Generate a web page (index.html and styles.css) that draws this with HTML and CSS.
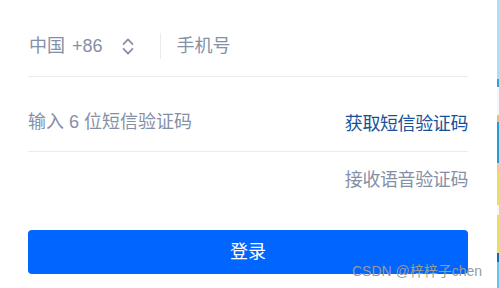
FILE: index.html
```html
<!DOCTYPE html>
<html lang="zh-CN">
<head>
<meta charset="utf-8">
<title>登录</title>
<link rel="stylesheet" href="styles.css">
</head>
<body>
<div class="form">
  <div class="row row-phone">
    <div class="country">
      <span class="country-text">中国 +86</span>
      <svg class="arrows" width="12" height="18" viewBox="0 0 12 18" aria-hidden="true">
        <path d="M1.5 7.2 L6 2.4 L10.5 7.2" fill="none" stroke="#8590a6" stroke-width="1.7" stroke-linecap="round" stroke-linejoin="round"/>
        <path d="M1.5 11.8 L6 16.6 L10.5 11.8" fill="none" stroke="#8590a6" stroke-width="1.7" stroke-linecap="round" stroke-linejoin="round"/>
      </svg>
    </div>
    <span class="sep"></span>
    <span class="placeholder">手机号</span>
  </div>
  <div class="row row-code">
    <span class="placeholder">输入 6 位短信验证码</span>
    <span class="link">获取短信验证码</span>
  </div>
  <div class="voice">
    <span class="voice-link">接收语音验证码</span>
  </div>
  <button class="submit" type="button">登录</button>
</div>
<div class="watermark">CSDN @梓梓子chen</div>
<div class="edge"></div>
</body>
</html>
```
FILE: styles.css
```css
html, body {
  margin: 0;
  padding: 0;
  background: #ffffff;
}
body {
  width: 499px;
  height: 288px;
  position: relative;
  overflow: hidden;
  font-family: "Liberation Sans", "Noto Sans CJK SC", sans-serif;
  font-size: 18px;
  line-height: 18px;
  color: #8590a6;
}
.form {
  width: 440px;
  margin-left: 28px;
  padding-top: 16px;
  display: flex;
  flex-direction: column;
}
.row {
  display: flex;
  align-items: center;
  border-bottom: 1px solid #ebebeb;
}
.row-phone {
  height: 60px;
}
.country {
  display: flex;
  align-items: center;
}
.country-text {
  padding-left: 1px;
  word-spacing: 2px;
}
.arrows {
  display: block;
  margin-left: 19px;
}
.sep {
  width: 1px;
  height: 26px;
  background: #ebebeb;
  margin-left: 26px;
  margin-right: 16px;
}
.row-code {
  margin-top: 15px;
  height: 59px;
  justify-content: space-between;
}
.link {
  color: #175199;
  position: relative;
  top: 2px;
  letter-spacing: -0.4px;
}
.voice {
  display: flex;
  justify-content: flex-end;
  margin-top: 19px;
  letter-spacing: -0.4px;
}
.submit {
  margin-top: 41px;
  height: 44px;
  border: none;
  border-radius: 4px;
  background: #0066ff;
  color: #ffffff;
  font-family: inherit;
  font-size: 18px;
  line-height: 18px;
  padding: 0;
  cursor: pointer;
}
.watermark {
  position: absolute;
  left: 352px;
  top: 263px;
  font-size: 14px;
  line-height: 17px;
  color: #9a9a9a;
  font-family: "Liberation Sans", "Noto Sans CJK SC", sans-serif;
  white-space: nowrap;
}
.edge {
  position: absolute;
  right: 0;
  top: 0;
  width: 2px;
  height: 288px;
  background: linear-gradient(to bottom,
    #a8e2f0 0, #a8e2f0 79px,
    #2aa3d9 79px, #2aa3d9 87px,
    #f4f7f8 87px, #f4f7f8 115px,
    #f3b87a 115px, #f3b87a 122px,
    #1f9fd6 122px, #1f9fd6 163px,
    #f5c98a 163px, #f5c98a 173px,
    #e8e060 173px, #e8e060 205px,
    #f6f6f6 205px, #f6f6f6 215px,
    #e8e060 215px, #e8e060 253px,
    #0e6fb0 253px, #0e6fb0 262px,
    #5ec6ec 262px, #5ec6ec 288px);
}
```
